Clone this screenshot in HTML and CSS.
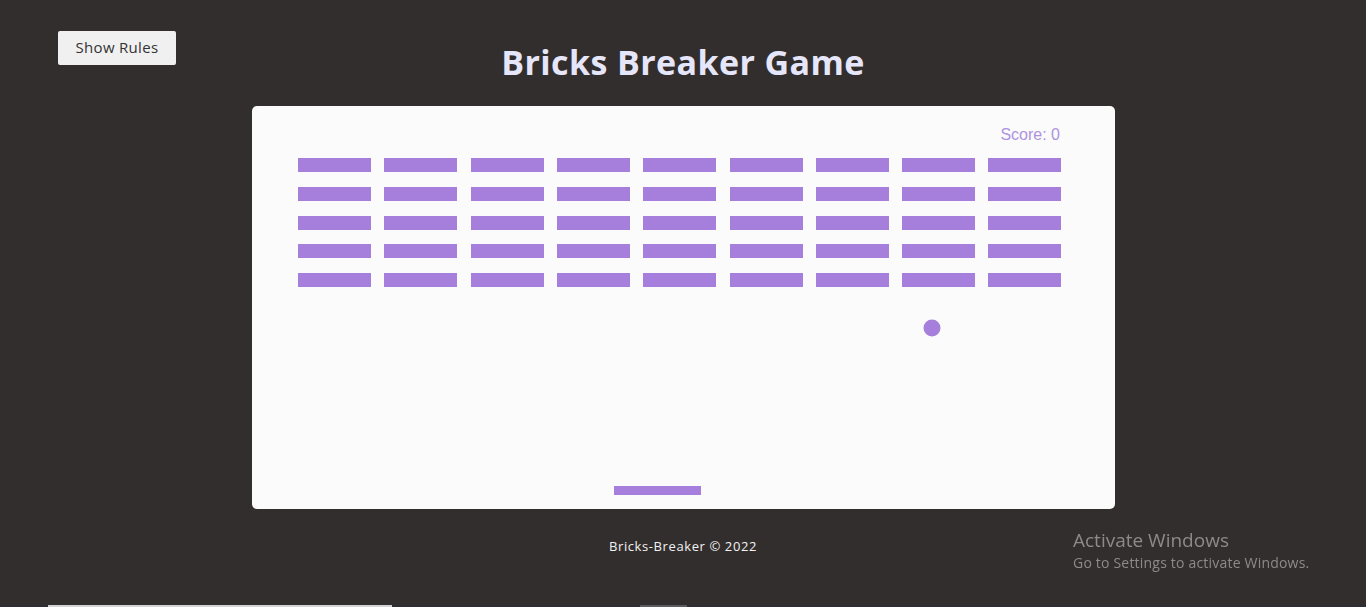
FILE: index.html
```html
<!DOCTYPE html>
<html lang="en">
<head>
<meta charset="utf-8">
<title>Bricks Breaker Game</title>
<link rel="stylesheet" href="styles.css">
</head>
<body>
<button class="rules-btn">Show Rules</button>
<main class="page">
  <h1 class="title">Bricks Breaker Game</h1>
  <div class="board">
    <svg class="board-svg" width="863" height="403" viewBox="0 0 863 403" xmlns="http://www.w3.org/2000/svg">
      <text x="808" y="34" class="score" text-anchor="end">Score: 0</text>
      <g fill="#a67fdc">
        <rect x="46" y="52" width="73" height="14"/><rect x="132" y="52" width="73" height="14"/><rect x="219" y="52" width="73" height="14"/><rect x="305" y="52" width="73" height="14"/><rect x="391" y="52" width="73" height="14"/><rect x="478" y="52" width="73" height="14"/><rect x="564" y="52" width="73" height="14"/><rect x="650" y="52" width="73" height="14"/><rect x="736" y="52" width="73" height="14"/>
        <rect x="46" y="81" width="73" height="14"/><rect x="132" y="81" width="73" height="14"/><rect x="219" y="81" width="73" height="14"/><rect x="305" y="81" width="73" height="14"/><rect x="391" y="81" width="73" height="14"/><rect x="478" y="81" width="73" height="14"/><rect x="564" y="81" width="73" height="14"/><rect x="650" y="81" width="73" height="14"/><rect x="736" y="81" width="73" height="14"/>
        <rect x="46" y="110" width="73" height="14"/><rect x="132" y="110" width="73" height="14"/><rect x="219" y="110" width="73" height="14"/><rect x="305" y="110" width="73" height="14"/><rect x="391" y="110" width="73" height="14"/><rect x="478" y="110" width="73" height="14"/><rect x="564" y="110" width="73" height="14"/><rect x="650" y="110" width="73" height="14"/><rect x="736" y="110" width="73" height="14"/>
        <rect x="46" y="138" width="73" height="14"/><rect x="132" y="138" width="73" height="14"/><rect x="219" y="138" width="73" height="14"/><rect x="305" y="138" width="73" height="14"/><rect x="391" y="138" width="73" height="14"/><rect x="478" y="138" width="73" height="14"/><rect x="564" y="138" width="73" height="14"/><rect x="650" y="138" width="73" height="14"/><rect x="736" y="138" width="73" height="14"/>
        <rect x="46" y="167" width="73" height="14"/><rect x="132" y="167" width="73" height="14"/><rect x="219" y="167" width="73" height="14"/><rect x="305" y="167" width="73" height="14"/><rect x="391" y="167" width="73" height="14"/><rect x="478" y="167" width="73" height="14"/><rect x="564" y="167" width="73" height="14"/><rect x="650" y="167" width="73" height="14"/><rect x="736" y="167" width="73" height="14"/>
        <circle cx="680" cy="222" r="8.5"/>
        <rect x="362" y="380" width="87" height="9"/>
      </g>
    </svg>
  </div>
  <footer class="footer">Bricks-Breaker © 2022</footer>
</main>
<div class="activate">
  <div class="activate-title">Activate Windows</div>
  <div class="activate-sub">Go to Settings to activate Windows.</div>
</div>
<div class="taskbar-edge">
  <span class="edge-a"></span>
  <span class="edge-b"></span>
</div>
</body>
</html>
```
FILE: styles.css
```css
html, body {
  margin: 0;
  padding: 0;
  height: 100%;
  overflow: hidden;
}

body {
  background: #332e2e;
  font-family: "Open Sans", "Noto Sans", sans-serif;
  position: relative;
}

.rules-btn {
  position: absolute;
  left: 58px;
  top: 31px;
  width: 118px;
  height: 34px;
  border: none;
  border-radius: 2px;
  background: #f0f0f0;
  color: #333;
  font-family: "Open Sans", "Noto Sans", sans-serif;
  font-size: 15px;
  line-height: 32px;
  letter-spacing: 0.3px;
  padding: 0 0 2px;
  cursor: pointer;
}

.page {
  display: flex;
  flex-direction: column;
  align-items: center;
}

.title {
  margin: 36px 0 0;
  height: 70px;
  font-size: 34px;
  line-height: 52px;
  font-weight: 700;
  color: #e6e6fa;
  letter-spacing: 0.4px;
}

.board {
  width: 863px;
  height: 403px;
  background: #fbfbfb;
  border-radius: 5px;
  overflow: hidden;
}

.board-svg {
  display: block;
}

.score {
  font-family: "Liberation Sans", Arial, sans-serif;
  font-size: 16px;
  fill: #ae92e0;
}

.footer {
  margin-top: 28px;
  font-family: "Open Sans", "Noto Sans", sans-serif;
  font-size: 13px;
  font-weight: 500;
  letter-spacing: 0.6px;
  color: #f2f2f2;
}

.activate {
  position: fixed;
  left: 1073px;
  top: 527px;
  color: #8e8a8a;
  font-family: "Open Sans", "Noto Sans", sans-serif;
}

.activate-title {
  font-size: 19px;
  line-height: 26px;
}

.activate-sub {
  font-size: 14px;
  line-height: 20px;
  letter-spacing: 0.2px;
}

.taskbar-edge {
  position: fixed;
  left: 0;
  right: 0;
  bottom: 0;
  height: 2px;
  background: #2c2e33;
}

.edge-a {
  position: absolute;
  left: 48px;
  width: 344px;
  top: 0;
  height: 2px;
  background: #d4d4d4;
}

.edge-b {
  position: absolute;
  left: 640px;
  width: 47px;
  top: 0;
  height: 2px;
  background: #5a5a5f;
}
```
